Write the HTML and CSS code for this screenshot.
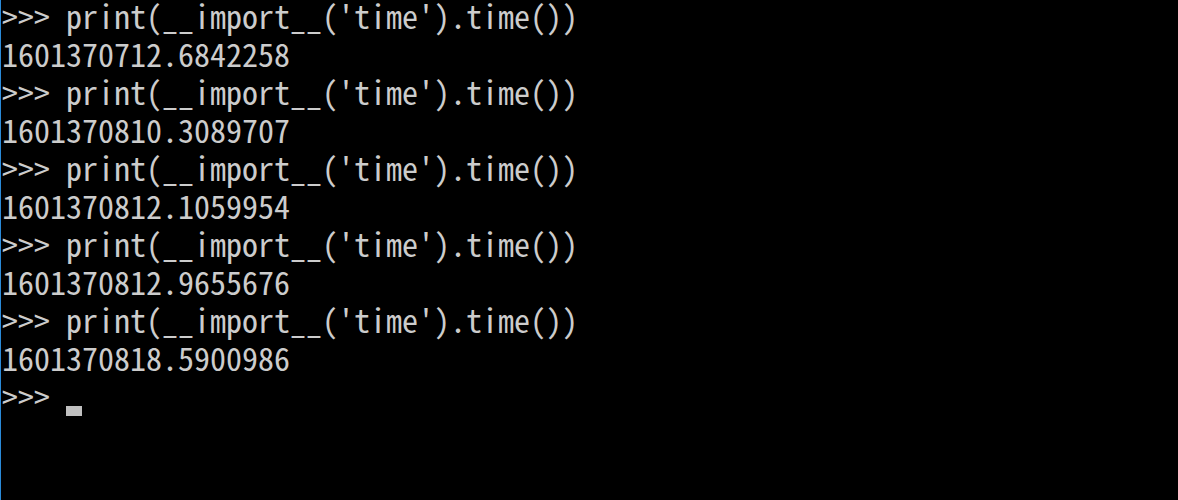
FILE: index.html
```html
<!DOCTYPE html>
<html>
<head>
<meta charset="utf-8">
<link rel="stylesheet" href="styles.css">
</head>
<body>
<div class="console">
<div class="line">&gt;&gt;&gt; print(__import__('time').time())</div>
<div class="line">1601370712.6842258</div>
<div class="line">&gt;&gt;&gt; print(__import__('time').time())</div>
<div class="line">1601370810.3089707</div>
<div class="line">&gt;&gt;&gt; print(__import__('time').time())</div>
<div class="line">1601370812.1059954</div>
<div class="line">&gt;&gt;&gt; print(__import__('time').time())</div>
<div class="line">1601370812.9655676</div>
<div class="line">&gt;&gt;&gt; print(__import__('time').time())</div>
<div class="line">1601370818.5900986</div>
<div class="line">&gt;&gt;&gt; <span class="cursor"></span></div>
</div>
</body>
</html>
```
FILE: styles.css
```css
html, body {
  margin: 0;
  padding: 0;
  background: #000000;
  height: 100%;
}
.console {
  box-sizing: border-box;
  height: 500px;
  border-left: 1px solid #2a8ad8;
  padding: 0 0 0 1px;
  color: #cccccc;
  font-family: "Noto Sans Mono CJK SC", "Liberation Mono", monospace;
  font-size: 32px;
}
.line {
  height: 31px;
  line-height: 31px;
  padding-bottom: 7px;
  white-space: pre;
}
.cursor {
  display: inline-block;
  width: 16px;
  height: 10px;
  background: #c0c0c0;
  vertical-align: -7px;
}
```
